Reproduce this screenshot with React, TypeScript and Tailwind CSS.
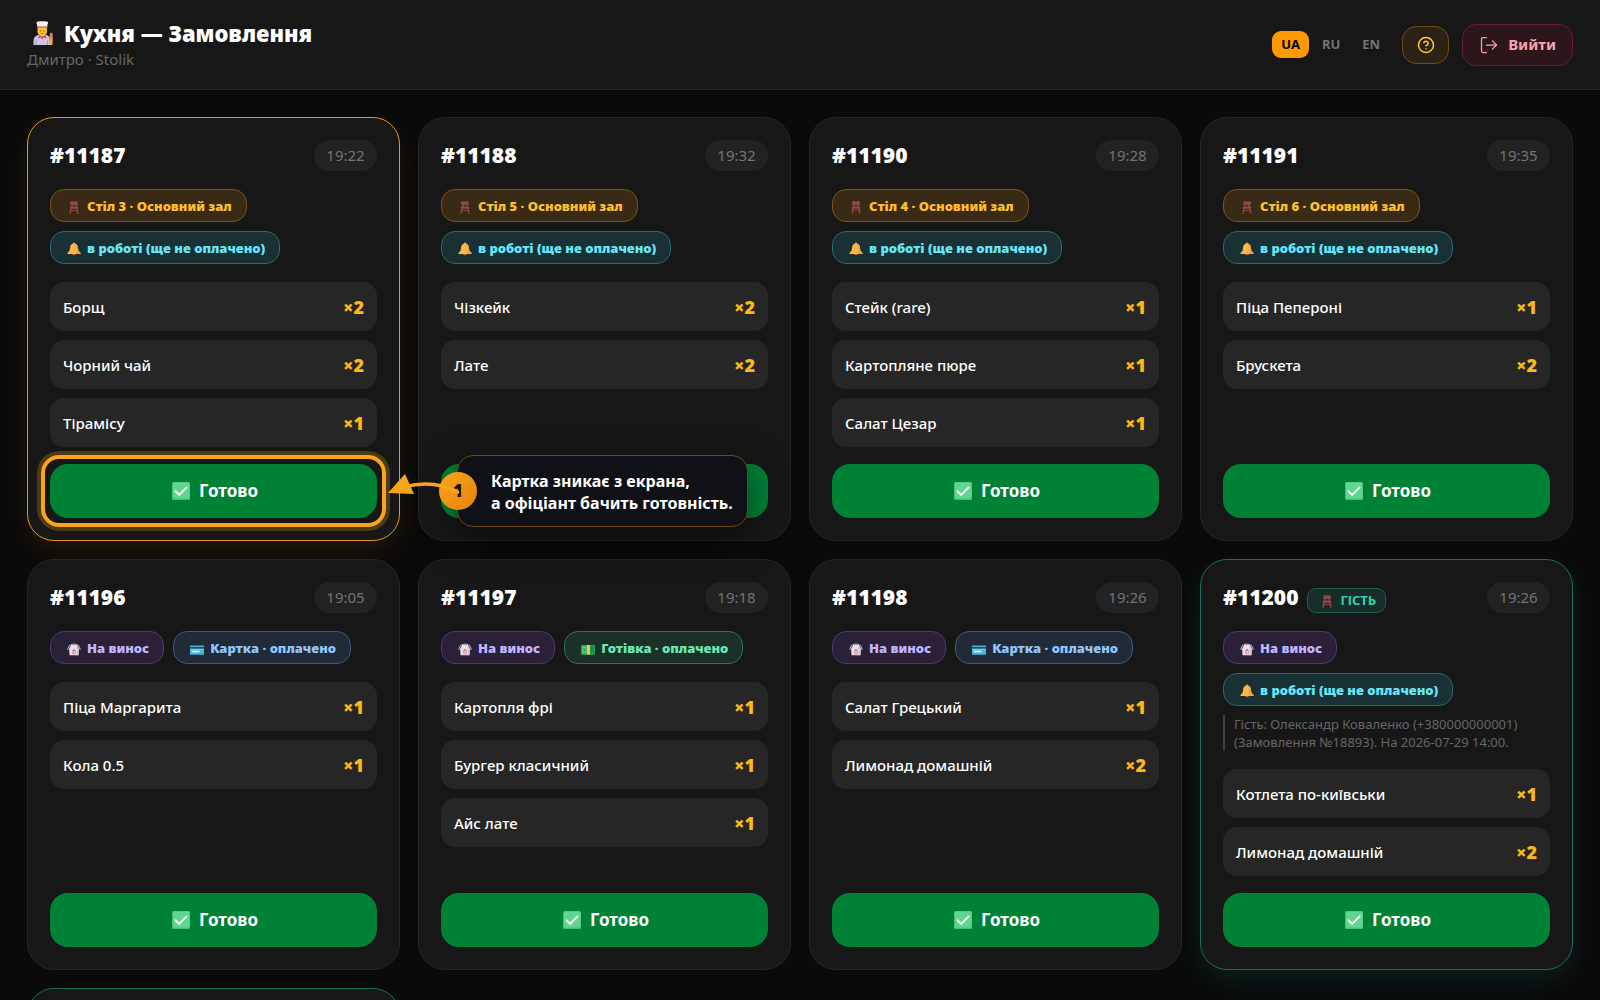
import { CircleQuestionMark, LogOut } from "lucide-react";
import { clsx } from "clsx";
import type { ReactNode } from "react";

type IconName = "chair" | "bell" | "bag" | "card" | "cash";
type Tone = "amber" | "cyan" | "violet" | "blue" | "green";

type Badge = { icon: IconName; tone: Tone; text: string };

type Order = {
  id: string;
  time: string;
  badges: Badge[];
  items: [string, number][];
  note?: string;
  guest?: boolean;
  active?: boolean;
};

const inWork: Badge = { icon: "bell", tone: "cyan", text: "в роботі (ще не оплачено)" };
const takeaway: Badge = { icon: "bag", tone: "violet", text: "На винос" };
const paidCard: Badge = { icon: "card", tone: "blue", text: "Картка · оплачено" };
const paidCash: Badge = { icon: "cash", tone: "green", text: "Готівка · оплачено" };
const table = (n: number): Badge => ({
  icon: "chair",
  tone: "amber",
  text: `Стіл ${n} · Основний зал`,
});

const orders: Order[] = [
  {
    id: "11187",
    time: "19:22",
    badges: [table(3), inWork],
    items: [["Борщ", 2], ["Чорний чай", 2], ["Тірамісу", 1]],
    active: true,
  },
  {
    id: "11188",
    time: "19:32",
    badges: [table(5), inWork],
    items: [["Чізкейк", 2], ["Лате", 2]],
  },
  {
    id: "11190",
    time: "19:28",
    badges: [table(4), inWork],
    items: [["Стейк (rare)", 1], ["Картопляне пюре", 1], ["Салат Цезар", 1]],
  },
  {
    id: "11191",
    time: "19:35",
    badges: [table(6), inWork],
    items: [["Піца Пепероні", 1], ["Брускета", 2]],
  },
  {
    id: "11196",
    time: "19:05",
    badges: [takeaway, paidCard],
    items: [["Піца Маргарита", 1], ["Кола 0.5", 1]],
  },
  {
    id: "11197",
    time: "19:18",
    badges: [takeaway, paidCash],
    items: [["Картопля фрі", 1], ["Бургер класичний", 1], ["Айс лате", 1]],
  },
  {
    id: "11198",
    time: "19:26",
    badges: [takeaway, paidCard],
    items: [["Салат Грецький", 1], ["Лимонад домашній", 2]],
  },
  {
    id: "11200",
    time: "19:26",
    badges: [takeaway, inWork],
    items: [["Котлета по-київськи", 1], ["Лимонад домашній", 2]],
    note: "Гість: Олександр Коваленко (+380000000001) (Замовлення №18893). На 2026-07-29 14:00.",
    guest: true,
  },
];

const tones: Record<Tone, string> = {
  amber: "bg-[#382a14] border-[#7c5310] text-[#ffbf2b]",
  cyan: "bg-[#193035] border-[#236b75] text-[#67e8f9]",
  violet: "bg-[#2a2138] border-[#4b3877] text-[#c4b4ff]",
  blue: "bg-[#202b37] border-[#3b5a80] text-[#93c5fd]",
  green: "bg-[#1b3128] border-[#2b7557] text-[#6ee7b7]",
};

const drawings: Record<IconName, ReactNode> = {
  chair: (
    <g fill="#8a4a48">
      <rect x="3.500" y="1.500" width="9" height="4.200" rx="1" />
      <path d="M5 5h1.600v3H5zM9.400 5H11v3H9.400z" />
      <rect x="3" y="7.400" width="10" height="2.600" rx="1" />
      <path d="M4 9.500h1.600L4.400 15.500H2.600zM10.400 9.500H12l1.400 6h-1.800z" />
      <path d="M4 11.600h8v1H4z" />
    </g>
  ),
  bell: (
    <>
      <circle cx="8" cy="2" r="1.300" fill="#e6a23c" />
      <path d="M8 1.800c-3 0-4.400 2.400-4.600 5.200C3.200 9.600 2.800 10.600.600 12.200V13.600h14.800v-1.400c-2.200-1.600-2.600-2.600-2.800-5.200C12.400 4.200 11 1.800 8 1.800z" fill="#fbb84a" />
      <path d="M8 1.800c3 0 4.400 2.400 4.600 5.200.2 2.600.6 3.600 2.800 5.200v1.400H10.500c1-4 .5-8-2.500-11.800z" fill="#f0a045" />
      <path d="M6 13.600h4a2 1.600 0 0 1-4 0z" fill="#b9692b" />
    </>
  ),
  bag: (
    <>
      <path d="M.8 9C1.600 5 4.500 2.300 8 2.300S14.400 5 15.200 9" fill="none" stroke="#b9b3bd" strokeWidth="1.200" />
      <path d="M5 3.200h6l2.600 4.400-.6 7.600H3l-.6-7.600z" fill="#e8e3ea" />
      <path d="M11 3.200l2.600 4.400-.6 7.600h-2z" fill="#cfc8d4" />
      <path d="m8 7.500 2 2.500-.3 4H6.300L6 10z" fill="#e0708c" />
      <path d="M7.200 10.500h1.600v2.500H7.200z" fill="#f7e9ee" />
    </>
  ),
  card: (
    <>
      <rect y="4" width="16" height="10.500" rx="1" fill="#4bb4de" />
      <path d="M0 5.800h16v2H0z" fill="#1d4759" />
      <path d="M0 7.800h16v1H0z" fill="#8edcf5" />
      <path d="M2 10h9v1.800H2z" fill="#e9f6fb" />
    </>
  ),
  cash: (
    <>
      <rect y="3.500" width="16" height="11" rx="1" fill="#22a55a" />
      <path d="M1.500 5h4.300v8H1.500z" fill="#4fce74" />
      <path d="M11 5h3.600v8H11z" fill="#178a4d" />
      <path d="M6.600 3.500h3.600v11H6.600z" fill="#f2c94c" />
      <path d="M3.200 7h1v4h-1z" fill="#178a4d" />
    </>
  ),
};

const Emoji = ({ name }: { name: IconName }) => (
  <svg viewBox="0 0 16 16" className="h-[14px] w-[14px] shrink-0" aria-hidden="true">
    {drawings[name]}
  </svg>
);

const ChefIcon = () => (
  <svg viewBox="0 0 24 24" className="h-6 w-6 shrink-0" aria-hidden="true">
    <path d="M2.500 24v-4c0-4 3-6.300 6.500-6.300h4.500c3.500 0 6 2.300 6 6.300v4z" fill="#cfc3e6" />
    <path d="M4.500 24v-4.500h1V24zM16 24v-4.500h1V24z" fill="#a996c9" />
    <path d="M17.500 20.500 19 12.500c.3-1.200 2.500-1 2.600.3l.2 5.200-.8 3.500z" fill="#cf8a63" />
    <rect x="18" y="18.500" width="3.500" height="5.500" rx="1" fill="#eab63a" />
    <path d="M6.500 5h9.500v5c0 3.200-2 5.200-4.700 5.200S6.500 13.200 6.500 10z" fill="#fbc02d" />
    <path d="M6 5h10.500v2.500L14.500 6.600H8L6 7.600z" fill="#a8603d" />
    <path d="M8 14.200l3.300 1.600 3.400-1.600.5 3-3-.8-1 2-1-2-3 .8z" fill="#e0395a" />
    <path d="M5.500 1.800c0-.8 1-1.300 2-1.200 2-.6 5.600-.6 7.600 0 1-.1 2 .4 2 1.200 0 1-.8 1.600-.8 3.800H6.300C6.300 3.400 5.500 2.800 5.500 1.800z" fill="#f1eef6" />
    <path d="M9.300 9.300h.9v1.300h-.9zM12.500 9.300h.9v1.300h-.9z" fill="#6b3a2a" />
    <path d="M9.700 12.200h3.300c-.4 1-2.900 1-3.300 0z" fill="#c0392b" />
  </svg>
);

const CheckIcon = () => (
  <svg viewBox="0 0 18 18" className="h-[18px] w-[18px] shrink-0" aria-hidden="true">
    <rect width="18" height="18" rx="1.500" fill="#4fbd7c" />
    <rect x="1" y="0.500" width="16.500" height="16" rx="1" fill="#5fd791" />
    <path d="m3.500 9.300 3.700 3.600L14.600 5.400" fill="none" stroke="#fff" strokeWidth="1.900" strokeLinecap="round" strokeLinejoin="round" />
  </svg>
);

const Hint = () => (
  <>
    <div className="pointer-events-none absolute -inset-[9px] rounded-[18px] border-4 border-[#f9a51b] shadow-[0_0_0_4px_rgba(245,158,11,0.25)]" />
    <div className="absolute -top-[9px] left-full z-10 ml-[80px] rounded-2xl border border-[#6b4712] bg-[#101017] pt-[14px] pr-[14px] pb-[12px] pl-[33px] text-base leading-[22px] font-bold whitespace-nowrap text-white shadow-[0_12px_36px_rgba(0,0,0,0.55)]">
      Картка зникає з екрана,
      <br />
      а офіціант бачить готовність.
      <span className="absolute top-1/2 left-0 flex h-[38px] w-[38px] -translate-x-1/2 -translate-y-1/2 items-center justify-center rounded-full bg-linear-to-br from-[#f9a51b] to-[#e5820b] text-[17px] font-black text-[#1a1206]">
        1
      </span>
      <svg viewBox="0 0 72 36" className="absolute top-[17px] -left-[71px] h-9 w-[72px]" aria-hidden="true">
        <path d="M17 14Q46 6 71 19" fill="none" stroke="#f9a51b" strokeWidth="3.500" strokeLinecap="round" />
        <path d="M1 20 18 1l9 20z" fill="#f9a51b" />
      </svg>
    </div>
  </>
);

const OrderCard = ({ order }: { order: Order }) => (
  <article
    className={clsx(
      "flex flex-col rounded-[27px] border bg-[#171717] p-[22px]",
      order.active && "border-[#e8971a] shadow-[0_10px_26px_rgba(245,158,11,0.09)]",
      order.guest && "border-[#14705f] shadow-[0_10px_26px_rgba(20,184,166,0.12)]",
      !order.active && !order.guest && "border-[#262626]"
    )}
  >
    <div className="flex h-[31px] items-center justify-between">
      <div className="flex items-center gap-[9px]">
        <h2 className="text-[21px] leading-[31px] font-black text-white">#{order.id}</h2>
        {order.guest && (
          <span className="mt-[6px] flex h-[25px] items-center gap-[6px] rounded-[9px] border border-[#1c5f53] bg-[#182c29] pr-[9px] pl-[12px] text-[13px] font-bold text-[#2dd4aa]">
            <Emoji name="chair" />
            ГІСТЬ
          </span>
        )}
      </div>
      <time className="flex h-[31px] w-[63px] items-center justify-center rounded-full bg-[#222222] text-[15px] text-[#737373]">
        {order.time}
      </time>
    </div>
    <div className="mt-[18px] flex flex-wrap gap-[9px]">
      {order.badges.map((badge) => (
        <span
          key={badge.text}
          className={clsx(
            "flex h-[33px] items-center gap-[6px] rounded-[14px] border pt-[2px] pr-[14px] pl-[16px] text-[13px] font-black whitespace-nowrap",
            tones[badge.tone]
          )}
        >
          <Emoji name={badge.icon} />
          {badge.text}
        </span>
      ))}
    </div>
    {order.note && (
      <p className="mt-[9px] border-l-2 border-[#404040] pl-[9px] text-[13px] leading-[18px] text-[#666666]">
        {order.note}
      </p>
    )}
    <ul className="mt-[18px] flex flex-col gap-[9px]">
      {order.items.map(([name, count]) => (
        <li
          key={name}
          className="flex h-[49px] items-center justify-between rounded-[14px] bg-[#262626] px-[13px] pt-[2px]"
        >
          <span className="text-[15px] font-medium text-white">{name}</span>
          <span className="text-[18px] font-black text-[#fdb913]">×{count}</span>
        </li>
      ))}
    </ul>
    <div className="mt-auto pt-[17px]">
      <div className="relative">
        <button
          type="button"
          className="flex h-[54px] w-full items-center justify-center gap-[9px] rounded-[18px] bg-[#008236] pl-[3px] text-[17px] font-bold text-white"
        >
          <CheckIcon />
          Готово
        </button>
        {order.active && <Hint />}
      </div>
    </div>
  </article>
);

export default function App() {
  return (
    <div className="flex h-screen flex-col overflow-hidden bg-[#0a0a0a] font-['Noto_Sans','Open_Sans',sans-serif]">
      <header className="flex h-[90px] shrink-0 items-center justify-between border-b border-[#262626] bg-[#171717] px-[27px]">
        <div>
          <h1 className="flex items-center gap-[9px] pl-[4px] text-[22px] leading-[28px] font-black text-white">
            <ChefIcon />
            Кухня — Замовлення
          </h1>
          <p className="text-[15px] leading-[24px] text-[#666666]">Дмитро · Stolik</p>
        </div>
        <div className="flex items-center gap-[13px]">
          <div className="flex items-center gap-[4px] text-[13px] font-bold">
            <button type="button" className="h-[27px] w-[37px] rounded-[9px] bg-[#fe9a00] text-black">
              UA
            </button>
            <button type="button" className="h-[27px] w-[36px] text-[#737373]">RU</button>
            <button type="button" className="h-[27px] w-[36px] text-[#737373]">EN</button>
          </div>
          <button
            type="button"
            aria-label="Допомога"
            className="flex h-[38px] w-[47px] items-center justify-center rounded-[14px] border border-[#6f4a10] bg-[#2b2114] text-[#ffc92e]"
          >
            <CircleQuestionMark size={18} />
          </button>
          <button
            type="button"
            className="flex h-[42px] items-center gap-[9px] rounded-[14px] border border-[#6b1a35] bg-[#2c161c] px-[16px] text-[15px] font-bold text-[#ffa1ad]"
          >
            <LogOut size={20} strokeWidth={1.5} />
            Вийти
          </button>
        </div>
      </header>
      <main className="grid grid-cols-4 gap-[18px] p-[27px]">
        {orders.map((order) => (
          <OrderCard key={order.id} order={order} />
        ))}
        <div className="h-60 rounded-[27px] border border-[#14705f] bg-[#171717]" />
      </main>
    </div>
  );
}
